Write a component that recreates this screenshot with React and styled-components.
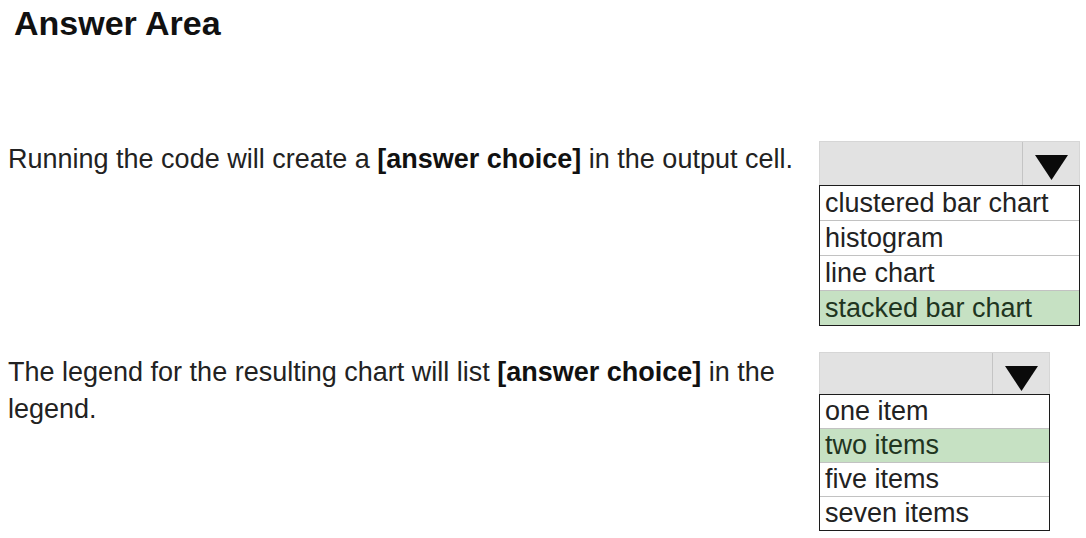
import React from 'react';
import styled, { createGlobalStyle } from 'styled-components';

const GlobalStyle = createGlobalStyle`
  body {
    margin: 0;
    background: #fff;
    font-family: "Liberation Sans", Arial, sans-serif;
  }
`;

const Page = styled.div`
  width: 1086px;
  height: 538px;
  box-sizing: border-box;
  padding: 3px 0 0 8px;
  overflow: hidden;
`;

const Title = styled.h1`
  margin: 0 0 98px 6px;
  font-size: 34px;
  line-height: 40px;
  font-weight: bold;
  color: #111;
`;

const Question = styled.div`
  display: grid;
  grid-template-columns: 811px 1fr;
  align-items: start;
  margin-bottom: ${p => p.$gap || 0}px;
`;

const Prompt = styled.p`
  margin: ${p => p.$offset || 0}px 0 0;
  width: ${p => p.$width}px;
  font-size: 27px;
  line-height: 37px;
  color: #222;

  b {
    color: #111;
  }
`;

const Select = styled.div`
  width: ${p => p.$width}px;
`;

const Header = styled.div`
  display: flex;
  height: ${p => p.$height}px;
  box-sizing: border-box;
  background: #e2e2e2;
  border: 1px solid #d6d6d6;
  border-bottom: none;
`;

const Blank = styled.div`
  flex: 1;
  border-right: 1px solid #c4c4c4;
`;

const ArrowCell = styled.div`
  width: 56px;
  display: flex;
  justify-content: center;
  padding-top: ${p => p.$top}px;
  box-sizing: border-box;
`;

const List = styled.ul`
  margin: 0;
  padding: 0;
  list-style: none;
  border: 1.5px solid #1c1c1c;
`;

const Item = styled.li`
  height: ${p => p.$height}px;
  padding-left: 5px;
  font-size: 27px;
  line-height: ${p => p.$height}px;
  color: ${p => (p.$picked ? '#1f351f' : '#222')};
  background: ${p => (p.$picked ? '#c6e1c3' : '#fff')};
  border-top: 1px solid #c2c2c2;

  &:first-child {
    border-top: none;
  }
`;

const Arrow = () => (
  <svg width="33" height="25" viewBox="0 0 33 25">
    <polygon points="0,0 33,0 16.5,25" fill="#0a0a0a" />
  </svg>
);

const Dropdown = ({ width, headerHeight, arrowTop, rowHeight, options, picked }) => (
  <Select $width={width}>
    <Header $height={headerHeight}>
      <Blank />
      <ArrowCell $top={arrowTop}>
        <Arrow />
      </ArrowCell>
    </Header>
    <List>
      {options.map(o => (
        <Item key={o} $height={rowHeight} $picked={o === picked}>
          {o}
        </Item>
      ))}
    </List>
  </Select>
);

const App = () => (
  <Page>
    <GlobalStyle />
    <Title>Answer Area</Title>
    <Question $gap={26}>
      <Prompt $width={805}>
        Running the code will create a <b>[answer choice]</b> in the output cell.
      </Prompt>
      <Dropdown
        width={261}
        headerHeight={44}
        arrowTop={13}
        rowHeight={34}
        options={['clustered bar chart', 'histogram', 'line chart', 'stacked bar chart']}
        picked="stacked bar chart"
      />
    </Question>
    <Question>
      <Prompt $width={790} $offset={2}>
        The legend for the resulting chart will list <b>[answer choice]</b> in the legend.
      </Prompt>
      <Dropdown
        width={231}
        headerHeight={42}
        arrowTop={13}
        rowHeight={33}
        options={['one item', 'two items', 'five items', 'seven items']}
        picked="two items"
      />
    </Question>
  </Page>
);

export default App;
